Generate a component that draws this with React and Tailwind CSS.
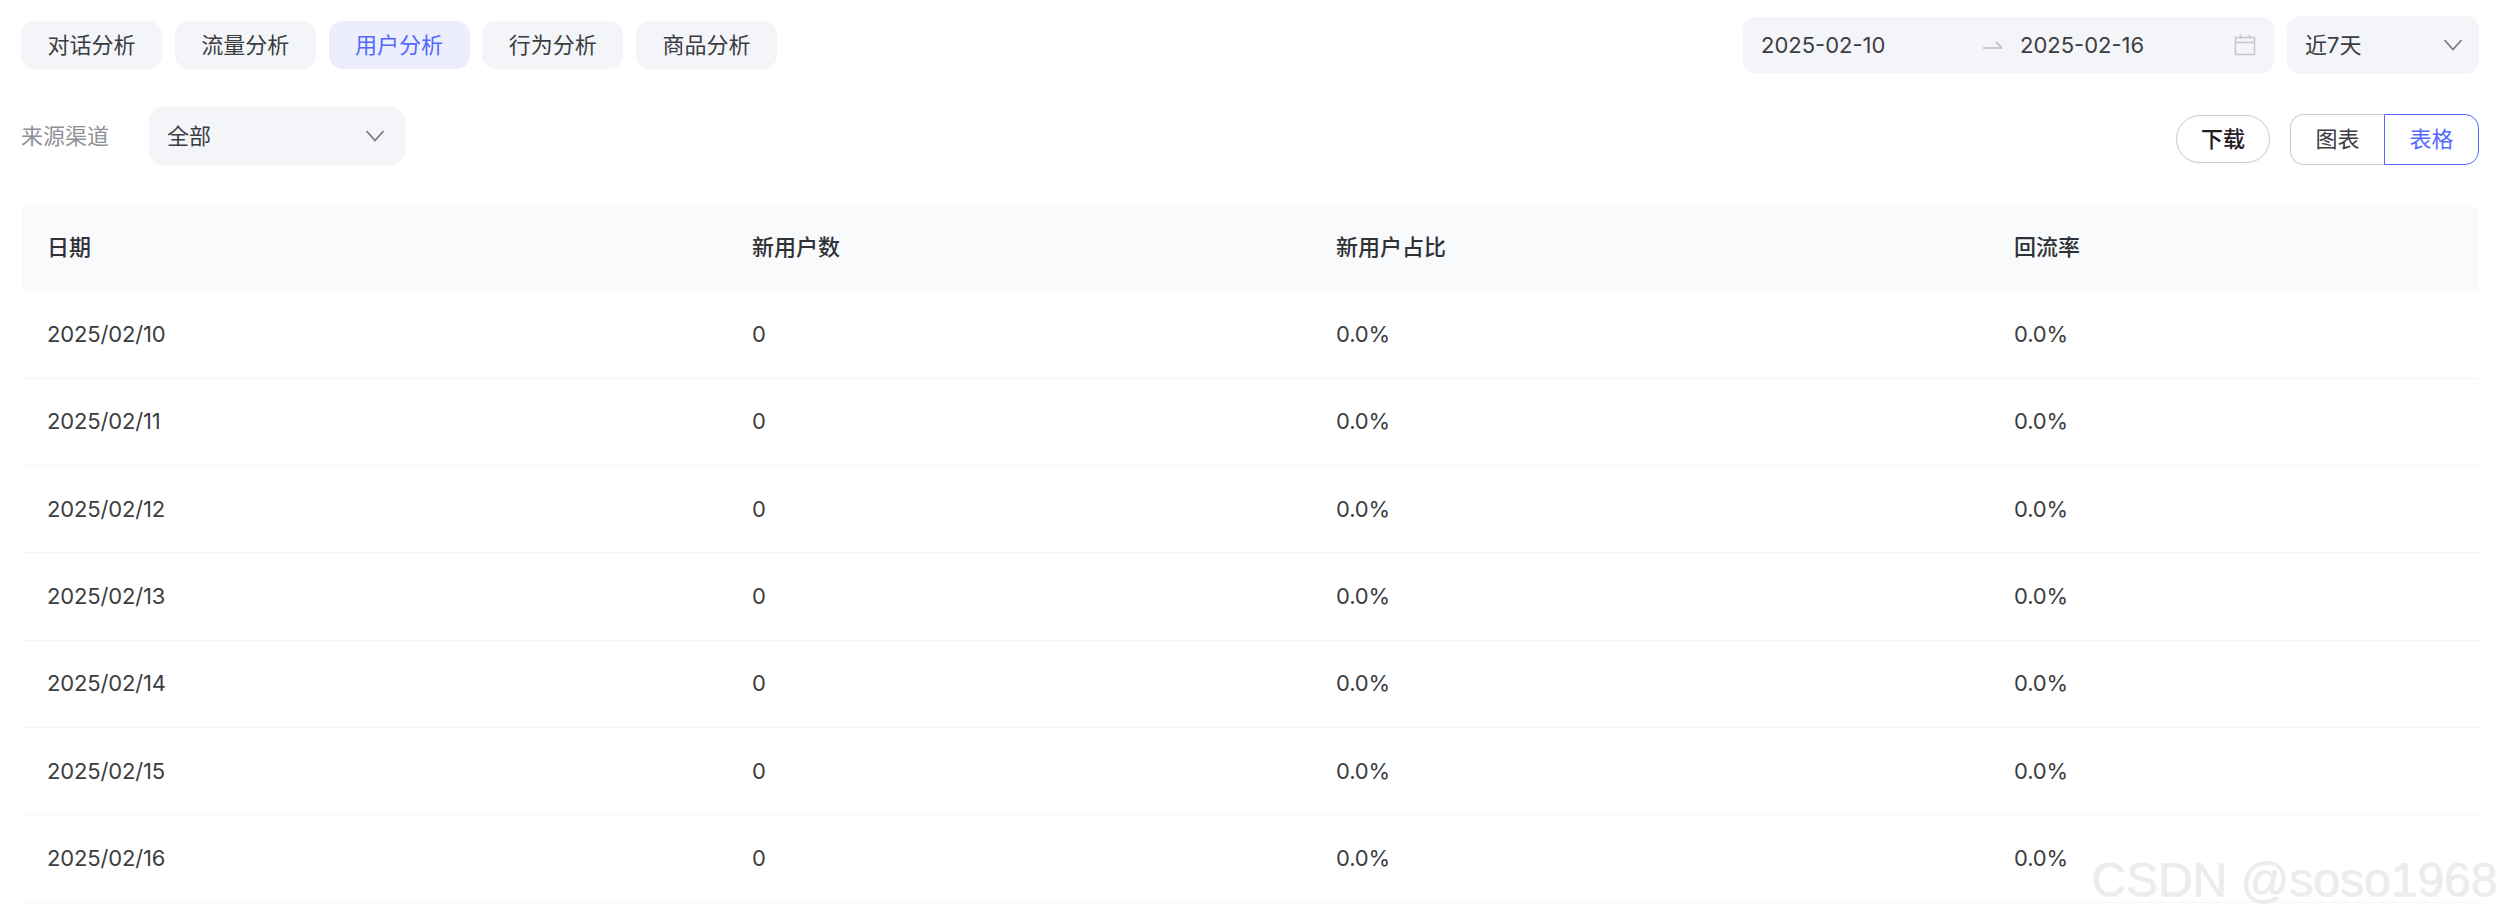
const tabs = ["对话分析", "流量分析", "用户分析", "行为分析", "商品分析"];
const rows = ["2025/02/10", "2025/02/11", "2025/02/12", "2025/02/13", "2025/02/14", "2025/02/15", "2025/02/16"];
const font = { fontFamily: 'Inter, "Noto Sans CJK SC", sans-serif' };

function CalendarIcon() {
  return (
    <svg width="22" height="22" viewBox="0 0 22 22" fill="none" stroke="#c4c7cf" strokeWidth="1.5">
      <rect x="1.5" y="3.5" width="19" height="17" />
      <path d="M1.5 8.5h19M6.5 0.5v4M15.5 0.5v4" />
    </svg>
  );
}

function Chevron() {
  return (
    <svg width="20" height="12" viewBox="0 0 20 12" fill="none" stroke="#74767d" strokeWidth="1.6">
      <path d="M1.5 1l8.5 9.5L18.5 1" />
    </svg>
  );
}

export default function App() {
  return (
    <div style={font} className="relative h-[922px] overflow-hidden bg-white pl-[21px] pr-[23px] text-[22px] text-[#3c3d42]">
      <div className="flex items-start justify-between pt-[16px]">
        <div className="mt-[5px] flex gap-[12.75px]">
          {tabs.map((t) => (
            <div
              key={t}
              className={`flex h-[48px] w-[141px] items-center justify-center rounded-[14px] ${
                t === "用户分析" ? "bg-[#eceefe] text-[#5468ff]" : "bg-[#f4f5f9]"
              }`}
            >
              {t}
            </div>
          ))}
        </div>
        <div className="flex gap-[13px]">
          <div className="mt-[1px] flex h-[56px] w-[531px] items-center rounded-[12px] bg-[#f4f5f9] pl-[18px] pr-[18px]">
            <span className="w-[222px]">2025-02-10</span>
            <svg width="20" height="10" viewBox="0 0 20 10" fill="none" stroke="#c4c7cf" strokeWidth="2">
              <path d="M0 8h19M13 2l6 6" />
            </svg>
            <span className="ml-[17px] flex-1">2025-02-16</span>
            <CalendarIcon />
          </div>
          <div className="flex h-[58px] w-[192px] items-center justify-between rounded-[14px] bg-[#f4f5f9] pl-[18px] pr-[16px]">
            <span>近7天</span>
            <Chevron />
          </div>
        </div>
      </div>

      <div className="mt-[33px] flex items-start justify-between">
        <div className="flex items-center">
          <span className="w-[128px] text-[#8f9097]">来源渠道</span>
          <div className="flex h-[58px] w-[256px] items-center justify-between rounded-[14px] bg-[#f4f5f9] pl-[18px] pr-[20px]">
            <span>全部</span>
            <Chevron />
          </div>
        </div>
        <div className="mt-[7px] flex items-start gap-[20px]">
          <button className="mt-[1px] h-[48px] w-[94px] rounded-[24px] border border-[#c9cbd2] bg-white font-medium text-[#1f2024] shadow-[0_2px_2px_rgba(0,0,0,0.03)]">
            下载
          </button>
          <div className="flex h-[51px]">
            <div className="flex w-[94px] items-center justify-center rounded-l-[14px] border border-r-0 border-[#c9cbd2]">图表</div>
            <div className="flex w-[95px] items-center justify-center rounded-r-[14px] border border-[#5468ff] text-[#5468ff]">表格</div>
          </div>
        </div>
      </div>

      <table className="mt-[38px] w-full table-fixed border-collapse">
        <colgroup>
          <col className="w-[704px]" />
          <col className="w-[584px]" />
          <col className="w-[678px]" />
          <col />
        </colgroup>
        <thead>
          <tr className="h-[88px] bg-[#f9fafc] text-left text-[#303136]">
            <th className="rounded-tl-[14px] pl-[26px] font-medium">日期</th>
            <th className="pl-[27px] font-medium">新用户数</th>
            <th className="pl-[27px] font-medium">新用户占比</th>
            <th className="rounded-tr-[14px] pl-[27px] font-medium">回流率</th>
          </tr>
        </thead>
        <tbody className="tracking-[-0.15px]">
          {rows.map((d) => (
            <tr key={d} className="h-[87.3px] border-b border-[#f4f5f7]">
              <td className="pl-[26px]">{d}</td>
              <td className="pl-[27px]">0</td>
              <td className="pl-[27px]">0.0%</td>
              <td className="pl-[27px]">0.0%</td>
            </tr>
          ))}
        </tbody>
      </table>

      <div
        style={{ fontFamily: '"Liberation Sans", sans-serif' }}
        className="absolute left-[2091px] top-[852px] whitespace-nowrap text-[48px] font-normal leading-[56px] text-[#ececec] [text-shadow:1px_1px_0_rgba(0,0,0,0.08)]"
      >
        CSDN @soso1968
      </div>
    </div>
  );
}
